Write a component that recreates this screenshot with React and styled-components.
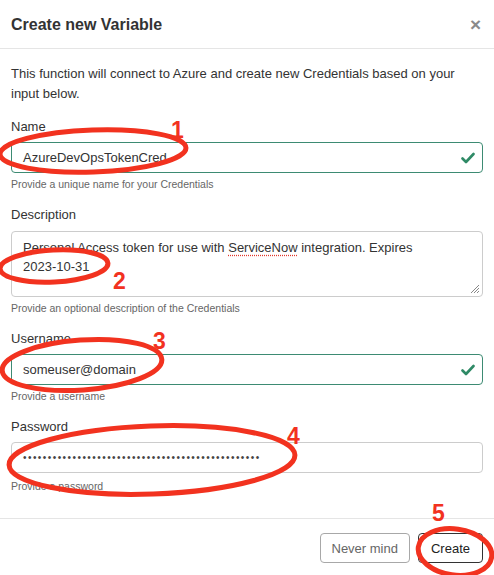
import React from "react";
import styled, { createGlobalStyle } from "styled-components";

const Global = createGlobalStyle`
  html, body { margin: 0; padding: 0; background: #fff; }
  body { font-family: "Liberation Sans", Arial, sans-serif; color: #333; }
  * { box-sizing: border-box; }
`;

const Modal = styled.div`
  position: relative;
  width: 494px;
  height: 575px;
  overflow: hidden;
  background: #fff;
`;

const Header = styled.div`
  height: 49px;
  display: flex;
  align-items: center;
  justify-content: space-between;
  padding: 1px 11px 0 11px;
  border-bottom: 1px solid #e5e5e5;
`;

const Title = styled.h4`
  margin: 0;
  font-size: 16px;
  font-weight: 700;
  color: #333;
`;

const Close = styled.span`
  font-size: 19px;
  font-weight: 700;
  color: #8a8a8a;
  margin-right: 2px;
  line-height: 1;
`;

const Body = styled.div`
  padding: 15px 11px 0 11px;
`;

const Intro = styled.p`
  margin: 0 0 14px 0;
  font-size: 13px;
  line-height: 19.5px;
  color: #333;
`;

const Group = styled.div`
  margin-bottom: 13px;
`;

const Label = styled.div`
  font-size: 13px;
  line-height: 20px;
  margin-bottom: ${(p) => (p.$tall ? "6px" : "5px")};
  color: #333;
`;

const Field = styled.div`
  height: ${(p) => (p.$tall ? "66px" : "31px")};
  border: 1px solid ${(p) => (p.$valid ? "#3d8b73" : "#ccc")};
  border-radius: 4px;
  display: flex;
  align-items: ${(p) => (p.$tall ? "flex-start" : "center")};
  justify-content: space-between;
  padding: ${(p) => (p.$tall ? "6px 50px 6px 11px" : "0 7px 0 11px")};
  font-size: 13px;
  line-height: 19px;
  color: #333;
  position: relative;
  overflow: hidden;
`;

const Dots = styled.span`
  font-size: 10px;
  letter-spacing: 1.45px;
  color: #444;
  white-space: nowrap;
`;

const Spell = styled.span`
  text-decoration: underline dotted #e2372b;
  text-underline-offset: 3px;
`;

const Grip = styled.svg`
  position: absolute;
  right: 2px;
  bottom: 2px;
`;

const Help = styled.div`
  margin-top: ${(p) => (p.$wide ? "6px" : "4px")};
  font-size: 10.5px;
  line-height: 15px;
  color: #666;
`;

const Footer = styled.div`
  margin-top: 24px;
  border-top: 1px solid #e5e5e5;
  padding: 14px 11px;
  display: flex;
  justify-content: flex-end;
  gap: 8px;
`;

const Button = styled.button`
  font-family: "Liberation Sans", Arial, sans-serif;
  font-size: 13px;
  height: 30px;
  padding: 0 ${(p) => (p.$primary ? "12px" : "11px")};
  background: #fff;
  border-radius: 4px;
  border: 1px solid ${(p) => (p.$primary ? "#333" : "#a8a8a8")};
  color: ${(p) => (p.$primary ? "#222" : "#666")};
`;

const Overlay = styled.svg`
  position: absolute;
  left: 0;
  top: 0;
  pointer-events: none;
`;

const Check = () => (
  <svg width="14" height="12" viewBox="0 0 14 12">
    <path d="M1.5 6.5 L5 10 L12.5 2" fill="none" stroke="#2f8a66" strokeWidth="2.6" strokeLinecap="round" strokeLinejoin="round" />
  </svg>
);

const RED = "#f2321f";

export default function App() {
  return (
    <>
      <Global />
      <Modal>
        <Header>
          <Title>Create new Variable</Title>
          <Close>×</Close>
        </Header>
        <Body>
          <Intro>
            This function will connect to Azure and create new Credentials based on your input below.
          </Intro>
          <Group>
            <Label>Name</Label>
            <Field $valid>
              <span>AzureDevOpsTokenCred</span>
              <Check />
            </Field>
            <Help>Provide a unique name for your Credentials</Help>
          </Group>
          <Group>
            <Label $tall>Description</Label>
            <Field $tall>
              <span>
                Personal Access token for use with <Spell>ServiceNow</Spell> integration. Expires 2023-10-31
              </span>
              <Grip width="12" height="12" viewBox="0 0 12 12">
                <path d="M11 3 L3 11 M11 6 L6 11 M11 9 L9 11" stroke="#888" strokeWidth="1" />
              </Grip>
            </Field>
            <Help>Provide an optional description of the Credentials</Help>
          </Group>
          <Group>
            <Label>Username</Label>
            <Field $valid>
              <span>someuser@domain</span>
              <Check />
            </Field>
            <Help>Provide a username</Help>
          </Group>
          <Group>
            <Label>Password</Label>
            <Field>
              <Dots>{"•".repeat(48)}</Dots>
            </Field>
            <Help $wide>Provide a password</Help>
          </Group>
        </Body>
        <Footer>
          <Button>Never mind</Button>
          <Button $primary>Create</Button>
        </Footer>
        <Overlay width="494" height="575" viewBox="0 0 494 575">
          <g fill="none" stroke={RED} strokeWidth="5">
            <ellipse cx="93" cy="151" rx="93" ry="21" transform="rotate(-2 93 151)" />
            <ellipse cx="54" cy="266" rx="54" ry="16" transform="rotate(-3 54 266)" />
            <ellipse cx="82" cy="365" rx="80" ry="25" transform="rotate(-4 82 365)" />
            <ellipse cx="152" cy="460" rx="143" ry="34" transform="rotate(-2 152 460)" />
            <ellipse cx="455" cy="552" rx="37" ry="23" transform="rotate(8 455 552)" />
          </g>
          <g fill={RED} fontFamily="Liberation Sans, Arial, sans-serif" fontWeight="700" fontSize="23">
            <text x="171" y="138">1</text>
            <text x="113" y="289">2</text>
            <text x="153" y="349">3</text>
            <text x="287" y="444">4</text>
            <text x="432" y="521">5</text>
          </g>
        </Overlay>
      </Modal>
    </>
  );
}
